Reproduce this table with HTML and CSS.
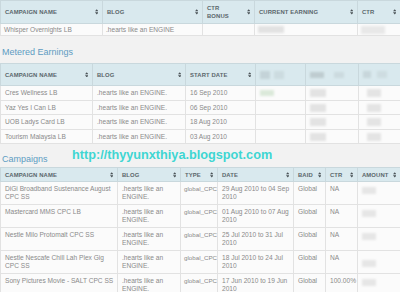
FILE: index.html
```html
<!DOCTYPE html>
<html>
<head>
<meta charset="utf-8">
<link rel="stylesheet" href="styles.css">
</head>
<body>
<div class="page">
  <table class="grid t1">
    <colgroup><col class="w102"><col class="w100"><col class="w52"><col class="w103"><col class="w43"></colgroup>
    <thead>
      <tr>
        <th><div class="th"><span>Campaign Name</span><svg class="sort" viewBox="0 0 4 6"><path d="M2 0L4 2.4H0Z M0 3.6H4L2 6Z"/></svg></div></th>
        <th><div class="th"><span>Blog</span><svg class="sort" viewBox="0 0 4 6"><path d="M2 0L4 2.4H0Z M0 3.6H4L2 6Z"/></svg></div></th>
        <th><div class="th"><span>CTR<br>Bonus</span><svg class="sort" viewBox="0 0 4 6"><path d="M2 0L4 2.4H0Z M0 3.6H4L2 6Z"/></svg></div></th>
        <th><div class="th"><span>Current Earning</span><svg class="sort" viewBox="0 0 4 6"><path d="M2 0L4 2.4H0Z M0 3.6H4L2 6Z"/></svg></div></th>
        <th><div class="th"><span>CTR</span><svg class="sort" viewBox="0 0 4 6"><path d="M2 0L4 2.4H0Z M0 3.6H4L2 6Z"/></svg></div></th>
      </tr>
    </thead>
    <tbody>
      <tr>
        <td>Whisper Overnights LB</td>
        <td>.hearts like an ENGINE</td>
        <td></td>
        <td><span class="blob b-a"></span></td>
        <td><span class="blob b-b"></span></td>
      </tr>
    </tbody>
  </table>

  <h2 class="section">Metered Earnings</h2>

  <table class="grid t2">
    <colgroup><col class="w92"><col class="w93"><col class="w70"><col class="w50"><col class="w53"><col class="w42"></colgroup>
    <thead>
      <tr>
        <th><div class="th"><span>Campaign Name</span><svg class="sort" viewBox="0 0 4 6"><path d="M2 0L4 2.4H0Z M0 3.6H4L2 6Z"/></svg></div></th>
        <th><div class="th"><span>Blog</span><svg class="sort" viewBox="0 0 4 6"><path d="M2 0L4 2.4H0Z M0 3.6H4L2 6Z"/></svg></div></th>
        <th><div class="th"><span>Start Date</span><svg class="sort" viewBox="0 0 4 6"><path d="M2 0L4 2.4H0Z M0 3.6H4L2 6Z"/></svg></div></th>
        <th class="hidden-h"><div class="th"><span class="blob h1"></span><span class="blob h2"></span></div></th>
        <th class="hidden-h"><div class="th"><span class="blob h3"></span><span class="blob h4"></span></div></th>
        <th class="hidden-h"><div class="th"><span class="blob h5"></span><span class="blob h6"></span></div></th>
      </tr>
    </thead>
    <tbody>
      <tr><td>Cres Wellness LB</td><td>.hearts like an ENGINE.</td><td>16 Sep 2010</td><td><span class="blob g1"></span></td><td><span class="blob r1"></span></td><td><span class="blob r2"></span></td></tr>
      <tr><td>Yaz Yes I Can LB</td><td>.hearts like an ENGINE.</td><td>06 Sep 2010</td><td></td><td><span class="blob r1"></span></td><td><span class="blob r2"></span></td></tr>
      <tr><td>UOB Ladys Card LB</td><td>.hearts like an ENGINE.</td><td>18 Aug 2010</td><td></td><td><span class="blob r1"></span></td><td><span class="blob r2"></span></td></tr>
      <tr><td>Tourism Malaysia LB</td><td>.hearts like an ENGINE.</td><td>03 Aug 2010</td><td></td><td><span class="blob r1"></span></td><td><span class="blob r2"></span></td></tr>
    </tbody>
  </table>

  <div class="section-wrap">
    <h2 class="section s2">Campaigns</h2>
    <div class="watermark">http://thyyunxthiya.blogspot.com</div>
  </div>

  <table class="grid t3">
    <colgroup><col class="w117"><col class="w63"><col class="w37"><col class="w76"><col class="w32"><col class="w32"><col class="w43"></colgroup>
    <thead>
      <tr>
        <th><div class="th"><span>Campaign Name</span><svg class="sort" viewBox="0 0 4 6"><path d="M2 0L4 2.4H0Z M0 3.6H4L2 6Z"/></svg></div></th>
        <th><div class="th"><span>Blog</span><svg class="sort" viewBox="0 0 4 6"><path d="M2 0L4 2.4H0Z M0 3.6H4L2 6Z"/></svg></div></th>
        <th><div class="th"><span>Type</span><svg class="sort" viewBox="0 0 4 6"><path d="M2 0L4 2.4H0Z M0 3.6H4L2 6Z"/></svg></div></th>
        <th><div class="th"><span>Date</span><svg class="sort" viewBox="0 0 4 6"><path d="M2 0L4 2.4H0Z M0 3.6H4L2 6Z"/></svg></div></th>
        <th><div class="th"><span>Baid</span><svg class="sort" viewBox="0 0 4 6"><path d="M2 0L4 2.4H0Z M0 3.6H4L2 6Z"/></svg></div></th>
        <th><div class="th"><span>CTR</span><svg class="sort" viewBox="0 0 4 6"><path d="M2 0L4 2.4H0Z M0 3.6H4L2 6Z"/></svg></div></th>
        <th><div class="th"><span>Amount</span><svg class="sort" viewBox="0 0 4 6"><path d="M2 0L4 2.4H0Z M0 3.6H4L2 6Z"/></svg></div></th>
      </tr>
    </thead>
    <tbody>
      <tr><td>DiGi Broadband Sustenance August CPC SS</td><td>.hearts like an ENGINE.</td><td class="type">global_CPC</td><td>29 Aug 2010 to 04 Sep 2010</td><td>Global</td><td>NA</td><td><span class="blob am"></span></td></tr>
      <tr><td>Mastercard MMS CPC LB</td><td>.hearts like an ENGINE.</td><td class="type">global_CPC</td><td>01 Aug 2010 to 07 Aug 2010</td><td>Global</td><td>NA</td><td><span class="blob am"></span></td></tr>
      <tr><td>Nestle Milo Protomalt CPC SS</td><td>.hearts like an ENGINE.</td><td class="type">global_CPC</td><td>25 Jul 2010 to 31 Jul 2010</td><td>Global</td><td>NA</td><td><span class="blob am"></span></td></tr>
      <tr><td>Nestle Nescafe Chill Lah Plex Gig CPC SS</td><td>.hearts like an ENGINE.</td><td class="type">global_CPC</td><td>18 Jul 2010 to 24 Jul 2010</td><td>Global</td><td>NA</td><td><span class="blob am am-low"></span></td></tr>
      <tr><td>Sony Pictures Movie - SALT CPC SS</td><td>.hearts like an ENGINE.</td><td class="type">global_CPC</td><td>17 Jun 2010 to 19 Jun 2010</td><td>Global</td><td>100.00%</td><td><span class="blob am"></span></td></tr>
    </tbody>
  </table>
</div>
</body>
</html>
```

FILE: styles.css
```css
html, body {
  margin: 0;
  padding: 0;
  background: #f2f2f2;
}
.page {
  width: 400px;
  height: 292px;
  overflow: hidden;
  font-family: "Liberation Sans", Arial, sans-serif;
}
.grid {
  border-collapse: collapse;
  table-layout: fixed;
  width: 400px;
}
.w102 { width: 102px; } .w100 { width: 100px; } .w52 { width: 52px; } .w103 { width: 103px; } .w43 { width: 43px; }
.w92 { width: 92px; } .w93 { width: 93px; } .w70 { width: 70px; } .w50 { width: 50px; } .w53 { width: 53px; } .w42 { width: 42px; }
.w117 { width: 117px; } .w63 { width: 63px; } .w37 { width: 37px; } .w76 { width: 76px; } .w32 { width: 32px; }

.grid th {
  background: #d9e9ee;
  border: 1px solid #c9d8dd;
  padding: 0 4px 0 4px;
  text-align: left;
  font-size: 5.9px;
  font-weight: bold;
  text-transform: uppercase;
  color: #5a666b;
  letter-spacing: 0.1px;
  line-height: 8px;
}
.th {
  display: flex;
  align-items: center;
  justify-content: space-between;
  gap: 2px;
}
.sort {
  width: 3.5px;
  height: 5.5px;
  flex: none;
  fill: #4a5256;
}
.grid td {
  background: #fbfbfb;
  border: 1px solid #e2e2e2;
  color: #8a8a8a;
  font-size: 6.6px;
  line-height: 7.6px;
  padding: 0 2px 0 4px;
  vertical-align: middle;
  overflow: hidden;
}
.t1 td { padding-left: 3px; }
.t1 th { height: 22px; }
.t1 td { height: 11px; }
.t2 th { height: 21px; }
.t2 td { height: 13.6px; }
.t3 th { height: 13px; }
.t3 td { vertical-align: top; padding-top: 3px; padding-bottom: 0; box-sizing: border-box; height: 23px; }
.t3 td.type { padding-left: 3px; padding-right: 0; white-space: nowrap; font-size: 6.2px; }
.t1 { border-left: 1px solid #c9d1d4; }

.section {
  margin: 0;
  padding: 11px 0 0 2px;
  height: 16px;
  font-size: 9px;
  line-height: 10px;
  font-weight: normal;
  color: #5d9cc2;
}
.section-wrap {
  position: relative;
}
.s2 { height: 13px; padding-top: 10px; }
.watermark {
  position: absolute;
  left: 72px;
  top: 4px;
  font-size: 12.7px;
  font-weight: bold;
  line-height: 14px;
  color: #3fd6d2;
  white-space: nowrap;
}

.blob {
  display: inline-block;
  vertical-align: middle;
  background: #e0e0e0;
  filter: blur(1px);
}
.b-a { width: 26px; height: 7px; background: #e2e2e2; }
.b-b { width: 24px; height: 8px; background: #e8e8e8; }
.hidden-h { background: #d9e9ee; }
.hidden-h .th { justify-content: flex-start; gap: 0; }
.h1 { width: 10px; height: 8px; background: #c4d3d8; }
.h2 { width: 10px; height: 8px; background: #ccdbe0; margin-left: 4px; }
.h3 { width: 14px; height: 6px; background: #bfccd0; }
.h4 { width: 10px; height: 6px; background: #ccdadf; margin-left: 10px; }
.h5 { width: 8px; height: 7px; background: #c8d6db; }
.h6 { width: 10px; height: 7px; background: #cedce1; margin-left: 6px; }
.g1 { width: 14px; height: 6px; background: #dbe9da; }
.r1 { width: 16px; height: 8px; background: #e3e3e3; }
.r2 { width: 14px; height: 8px; background: #e4e4e4; margin-left: 4px; }
.am { width: 14px; height: 7px; background: #e6e6e6; margin-top: 1px; }
.am-low { margin-top: 6px; }
```
